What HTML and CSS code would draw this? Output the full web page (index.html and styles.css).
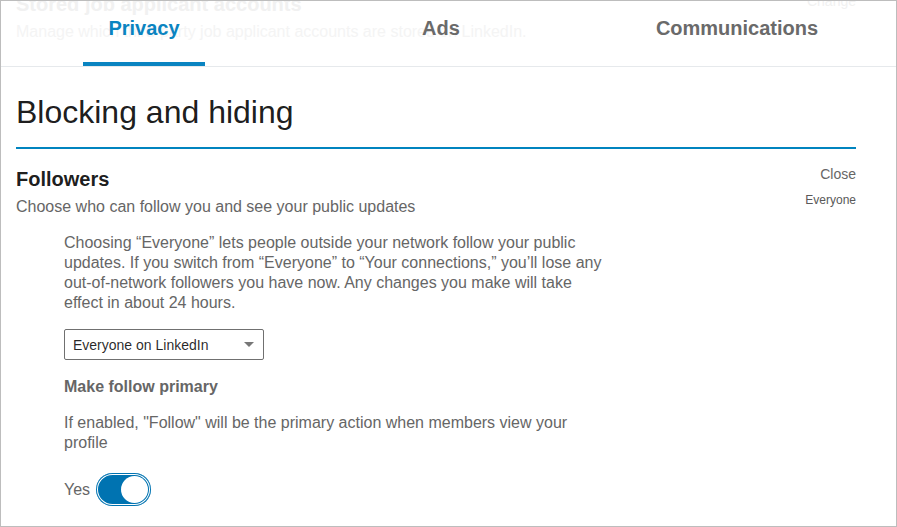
FILE: index.html
```html
<!DOCTYPE html>
<html lang="en">
<head>
<meta charset="utf-8">
<title>Blocking and hiding</title>
<link rel="stylesheet" href="styles.css">
</head>
<body>
<div class="frame">
  <header class="topbar">
    <div class="ghost">
      <div class="ghost-row">
        <span class="ghost-title">Stored job applicant accounts</span>
        <span class="ghost-change">Change</span>
      </div>
      <div class="ghost-desc">Manage which third-party job applicant accounts are stored on LinkedIn.</div>
    </div>
    <nav class="tabs">
      <div class="tab-cell"><a class="tab active">Privacy</a></div>
      <div class="tab-cell"><a class="tab">Ads</a></div>
      <div class="tab-cell"><a class="tab">Communications</a></div>
    </nav>
  </header>
  <main class="content">
    <h1 class="page-title">Blocking and hiding</h1>
    <section class="setting">
      <div class="setting-head">
        <div class="setting-main">
          <h2 class="setting-title">Followers</h2>
          <p class="setting-sub">Choose who can follow you and see your public updates</p>
        </div>
        <div class="setting-side">
          <span class="close">Close</span>
          <span class="current">Everyone</span>
        </div>
      </div>
      <div class="setting-body">
        <p class="text">Choosing “Everyone” lets people outside your network follow your public updates. If you switch from “Everyone” to “Your connections,” you’ll lose any out-of-network followers you have now. Any changes you make will take effect in about 24 hours.</p>
        <div class="select">
          <span class="select-value">Everyone on LinkedIn</span>
          <span class="select-arrow"></span>
        </div>
        <div class="label">Make follow primary</div>
        <p class="text text-gap">If enabled, "Follow" will be the primary action when members view your profile</p>
        <div class="toggle-row">
          <span class="toggle-label">Yes</span>
          <span class="toggle"><span class="knob"></span></span>
        </div>
      </div>
    </section>
  </main>
</div>
</body>
</html>
```

FILE: styles.css
```css
html, body {
  margin: 0;
  padding: 0;
  background: #fff;
}

body {
  font-family: "Liberation Sans", Arial, sans-serif;
}

.frame {
  width: 897px;
  height: 527px;
  box-sizing: border-box;
  border: 1px solid #bdbdbd;
  overflow: hidden;
  background: #fff;
}

.topbar {
  position: relative;
  height: 65px;
  border-bottom: 1px solid #e6e9ec;
  overflow: hidden;
}

.ghost {
  padding: 0 40px 0 15px;
}

.ghost-row {
  display: flex;
  justify-content: space-between;
  align-items: flex-start;
  margin-top: -8px;
}

.ghost-title {
  font-size: 20px;
  font-weight: 700;
  line-height: 23px;
  color: #f1f1f1;
}

.ghost-change {
  font-size: 14px;
  line-height: 16px;
  color: #f1f1f1;
}

.ghost-desc {
  margin-top: 6px;
  font-size: 16px;
  line-height: 19px;
  color: #f4f4f4;
}

.tabs {
  position: absolute;
  top: 0;
  left: 0;
  right: 0;
  bottom: 0;
  display: grid;
  grid-template-columns: 286px 308px 284px;
}

.tab-cell {
  display: flex;
  justify-content: center;
}

.tab {
  display: block;
  box-sizing: border-box;
  height: 65px;
  padding: 16px 25px 0;
  font-size: 20px;
  font-weight: 700;
  line-height: 23px;
  color: #6a6a6a;
  border-bottom: 4px solid transparent;
  cursor: pointer;
}

.tab.active {
  color: #0a84c1;
  border-bottom-color: #0a84c1;
}

.content {
  padding: 25px 40px 0 15px;
}

.page-title {
  margin: 0;
  padding-bottom: 15px;
  font-size: 32px;
  font-weight: 400;
  line-height: 40px;
  color: rgba(0, 0, 0, 0.9);
  border-bottom: 2px solid #0084bf;
}

.setting-head {
  margin-top: 18px;
  display: flex;
  justify-content: space-between;
  align-items: flex-start;
}

.setting-title {
  margin: 0;
  font-size: 20px;
  font-weight: 700;
  line-height: 24px;
  color: rgba(0, 0, 0, 0.9);
}

.setting-sub {
  margin: 6px 0 0;
  font-size: 16px;
  line-height: 20px;
  color: #666;
}

.setting-side {
  display: flex;
  flex-direction: column;
  align-items: flex-end;
  margin-top: -1px;
}

.close {
  font-size: 14px;
  line-height: 16px;
  color: #666;
}

.current {
  margin-top: 10px;
  font-size: 12px;
  line-height: 16px;
  color: #595959;
}

.setting-body {
  margin-top: 16px;
  padding-left: 48px;
}

.text {
  margin: 0;
  max-width: 544px;
  font-size: 16px;
  line-height: 20px;
  color: #666;
}

.text-gap {
  margin-top: 16px;
}

.select {
  margin-top: 16px;
  width: 200px;
  height: 31px;
  box-sizing: border-box;
  border: 1px solid #707070;
  border-radius: 2px;
  padding: 0 9px 0 8px;
  display: flex;
  align-items: center;
  justify-content: space-between;
}

.select-value {
  font-size: 14px;
  color: rgba(0, 0, 0, 0.85);
}

.select-arrow {
  width: 0;
  height: 0;
  border-left: 5px solid transparent;
  border-right: 5px solid transparent;
  border-top: 5px solid #777;
}

.label {
  margin-top: 17px;
  font-size: 16px;
  font-weight: 700;
  line-height: 20px;
  color: #666;
}

.toggle-row {
  margin-top: 20px;
  display: flex;
  align-items: center;
  gap: 6px;
}

.toggle-label {
  font-size: 16px;
  line-height: 20px;
  color: #666;
}

.toggle {
  width: 55px;
  height: 33px;
  box-sizing: border-box;
  border-radius: 17px;
  background: #0073b1;
  box-shadow: inset 0 0 0 1px #0073b1, inset 0 0 0 2px #fff;
  display: flex;
  align-items: center;
  justify-content: flex-end;
  padding-right: 3px;
}

.knob {
  width: 27px;
  height: 27px;
  border-radius: 50%;
  background: #fff;
}
```
